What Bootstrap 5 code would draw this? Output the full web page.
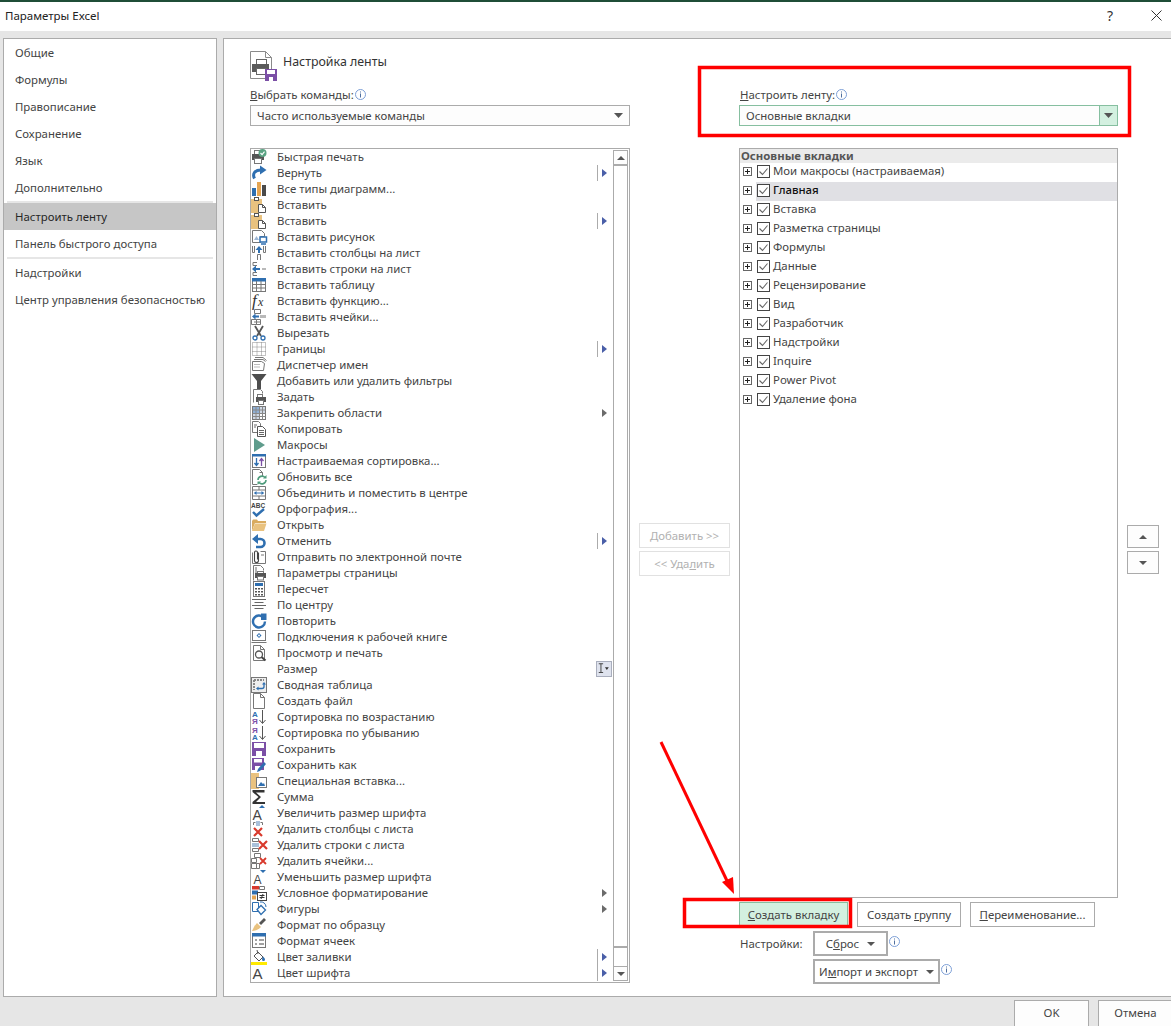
<!DOCTYPE html>
<html lang="ru">
<head>
  <meta charset="UTF-8">
  <meta name="viewport" content="width=device-width, initial-scale=1.0">
  <title>Параметры Excel</title>
  <link href="https://cdn.jsdelivr.net/npm/bootstrap@5.3.0/dist/css/bootstrap.min.css" rel="stylesheet">
  <style>
    body { margin: 0; height: 1026px; overflow: hidden; background: #e6e6e6; font-family: "Noto Sans", sans-serif; font-size: 11.4px; line-height: 16px; color: #444; }
    .dlg { position: relative; height: 1026px; overflow: hidden; }
    .dlg-title { height: 31px; background: #fff; border-top: 2px solid #1f4e37; padding: 0 0 2px 5px; color: #222; font-size: 11.5px; }
    .dlg-title .close-x { margin: 0 9px 0 38px; }
    .dlg-title .help-q { font-size: 14px; color: #333; }
    .dlg-body { height: 959px; margin-top: 7px; }
    .side { width: 214px; margin-left: 3px; background: #fff; border: 1px solid #ababab; flex: none; }
    .side .list-group-item { height: 27px; padding: 0 0 0 11px; border: 0; background: transparent; color: #444; font-size: 11.4px; line-height: 27px; white-space: nowrap; }
    .side .list-group-item.active { background: #c6c6c6; color: #262626; }
    .side-sep { height: 2px; margin: 0 3px; background: #e6e6e6; }
    .main { flex: 1; margin-left: 6px; background: #fff; border: 1px solid #ababab; border-right: 0; padding-left: 26px; }
    .main-head { height: 47px; padding-top: 7px; gap: 6px; font-size: 12.4px; color: #333; }
    .main-head span { margin-top: -8px; }
    .col-cmd { width: 380px; }
    .col-move { width: 91px; margin-left: 9px; padding-top: 437px; gap: 3px; }
    .col-rib { width: 379px; margin-left: 9px; }
    .col-order { width: 32px; margin-left: 9px; padding-top: 439px; gap: 3px; }
    .lbl { height: 19px; padding-bottom: 2px; line-height: 16px; white-space: nowrap; gap: 1px; }
    .col-rib .lbl { padding-left: 1px; }
    .opt-select.form-select { height: 21px; padding: 0 20px 0 6px; border: 1px solid #ababab; border-radius: 0; font-size: 11.4px; line-height: 19px; color: #444; box-shadow: none;
      background-color: #fdfdfd; background-size: 9px 5px; background-position: right 6px center; background-repeat: no-repeat;
      background-image: url("data:image/svg+xml,%3csvg xmlns='http://www.w3.org/2000/svg' viewBox='0 0 9 5'%3e%3cpath d='M0 0h9L4.5 5z' fill='%23555'/%3e%3c/svg%3e"); }
    .opt-select.green.form-select { border-color: #86bfa0;
      background-image: url("data:image/svg+xml,%3csvg xmlns='http://www.w3.org/2000/svg' viewBox='0 0 9 5'%3e%3cpath d='M0 0h9L4.5 5z' fill='%23555'/%3e%3c/svg%3e"), linear-gradient(#d3f0e0, #d3f0e0), linear-gradient(#86bfa0, #86bfa0);
      background-size: 9px 5px, 17px 100%, 1px 100%;
      background-position: right 4px center, right 0 top, right 17px top; }
    .cmd-box { height: 835px; margin-top: 22px; border: 1px solid #ababab; background: #fff; }
    .cmd-rows { flex: 1; min-width: 0; }
    .cmd-row { height: 16px; padding-right: 6px; white-space: nowrap; }
    .cmd-row > svg:first-child { flex: none; margin-right: 10px; overflow: visible; }
    .cmd-split { width: 1px; height: 16px; margin-right: 4px; background: #ababab; }
    .cmd-arrow { width: 0; height: 0; border-left: 5px solid #4a5fa8; border-top: 4px solid transparent; border-bottom: 4px solid transparent; }
    .cmd-arrow.plain { border-left-color: #6b6b6b; }
    .cmd-size { margin-right: -5px; background: #dfe3ee; border: 1px solid #a9aebd; }
    .cmd-scroll { width: 15px; margin: 1px 1px 1px 0; flex: none; border-left: 1px solid #ababab; border-right: 1px solid #ababab; }
    .scr-btn { height: 15px; border-top: 1px solid #ababab; border-bottom: 1px solid #ababab; background: #fdfdfd; }
    .scr-thumb { height: 784px; margin-top: -1px; border-top: 2px solid #ababab; border-bottom: 2px solid #ababab; }
    .tri-up { width: 0; height: 0; border-left: 4px solid transparent; border-right: 4px solid transparent; border-bottom: 4px solid #555; }
    .tri-dn { width: 0; height: 0; border-left: 4px solid transparent; border-right: 4px solid transparent; border-top: 4px solid #555; }
    .rib-box { height: 750px; margin-top: 22px; border: 1px solid #ababab; background: #fff; }
    .rib-head { height: 14px; padding-left: 1px; background: #ebebeb; font-weight: 700; line-height: 14px; color: #555; }
    .rib-row { height: 19px; padding-left: 3px; gap: 4px; }
    .rib-plus { flex: none; margin-top: -3px; }
    .rib-label { flex: 1; height: 19px; padding: 0 0 3px 1px; gap: 3px; line-height: 16px; }
    .rib-label.sel { background: #e0e0e4; color: #111; font-weight: 500; }
    .rib-check.form-check-input { width: 13px; height: 13px; margin: 0; flex: none; border: 1px solid #444; border-radius: 0; background-color: #fff; box-shadow: none; opacity: 1;
      background-size: 11px 11px; background-image: url("data:image/svg+xml,%3csvg xmlns='http://www.w3.org/2000/svg' viewBox='0 0 11 11'%3e%3cpath d='M1.5 5.5l3 3 5-6' fill='none' stroke='%23666' stroke-width='1.1'/%3e%3c/svg%3e"); }
    .opt-btn.btn { height: 25px; padding: 0; border: 1px solid #ababab; border-radius: 0; background: #fff; color: #444; font-size: 11.4px; line-height: 22px; white-space: nowrap; }
    .opt-btn.btn:disabled { opacity: 1; border: 1px solid #e1e1e1; color: #b1b1b1; background: #fff; }
    .opt-btn.hot.btn { background: #d3f0e0; border-color: #86bfa0; }
    .opt-btn.thick.btn { border-width: 2px; }
    .btn-new { width: 109px; margin-right: 9px; }
    .btn-grp { width: 104px; margin-right: 9px; }
    .btn-ren { width: 125px; }
    .rib-actions { margin-top: 4px; }
    .set-row { margin-top: 4px; height: 25px; }
    .set-row + .set-row { margin-top: 3px; }
    .set-name { width: 74px; padding-left: 1px; }
    .btn-reset { width: 75px; }
    .btn-imp { width: 127px; }
    .set-info { margin: -4px 0 0 1px; }
    .order-btn { width: 32px; height: 23px; border: 1px solid #ababab; background: #fdfdfd; }
    .dlg-foot { height: 29px; padding-top: 3px; gap: 9px; }
    .foot-btn.btn { width: 75px; height: 30px; padding: 0 0 5px; border: 1px solid #ababab; border-radius: 0; background: #fdfdfd; color: #444; font-size: 11.4px; flex: none; }
    .foot-btn.cancel { margin-right: -2px; }
    .marks { position: absolute; left: 0; top: 0; pointer-events: none; }
  </style>
</head>
<body>
  <div class="dlg">
    <div class="dlg-title d-flex align-items-center">
      <span class="flex-grow-1">Параметры Excel</span>
      <span class="help-q">?</span>
      <svg class="close-x" width="11" height="11" viewBox="0 0 11 11"><path d="M.5.5l10 10M10.5.5l-10 10" stroke="#333" fill="none"/></svg>
    </div>

    <div class="dlg-body d-flex">
      <!-- Левое меню -->
      <div class="side">
        <div class="list-group list-group-flush" id="side-a"></div>
        <div class="side-sep"></div>
        <div class="list-group list-group-flush" id="side-b"></div>
        <div class="side-sep"></div>
        <div class="list-group list-group-flush" id="side-c"></div>
      </div>

      <div class="main">
        <div class="main-head d-flex align-items-center">
          <svg width="27" height="30" viewBox="0 0 27 30">
            <path d="M.5.5h15l6 6v21H.5z" fill="#fff" stroke="#8a8a8a"/>
            <path d="M15.5.5v6h6" fill="none" stroke="#8a8a8a"/>
            <rect x="6.5" y="8.5" width="10" height="5" fill="#fff" stroke="#666"/>
            <rect x="2" y="13" width="17" height="8" fill="#5a5a5a"/>
            <rect x="6.5" y="17.5" width="10" height="6" fill="#fff" stroke="#666"/>
            <rect x="15" y="18" width="12" height="12" fill="#7b4fa6"/>
            <rect x="17" y="19" width="8" height="4" fill="#fff"/>
            <rect x="19" y="26" width="4" height="4" fill="#fff"/>
          </svg>
          <span>Настройка ленты</span>
        </div>

        <div class="d-flex">
          <div class="col-cmd">
            <div class="lbl d-flex align-items-center"><span><u>В</u>ыбрать команды:</span><svg class="info-i" width="11" height="11" viewBox="0 0 11 11"><circle cx="5.5" cy="5.5" r="5" fill="none" stroke="#7d9fd6"/><path d="M5.5 2.5v1M5.5 4.5v4" stroke="#4f6f9f"/></svg></div>
            <select class="form-select opt-select"><option>Часто используемые команды</option></select>
            <div class="cmd-box d-flex">
              <div class="cmd-rows" id="cmd-list"></div>
              <div class="cmd-scroll d-flex flex-column">
                <div class="scr-btn d-flex align-items-center justify-content-center"><div class="tri-up"></div></div>
                <div class="scr-thumb"></div>
                <div class="flex-grow-1"></div>
                <div class="scr-btn d-flex align-items-center justify-content-center"><div class="tri-dn"></div></div>
              </div>
            </div>
          </div>

          <div class="col-move d-flex flex-column">
            <button class="btn opt-btn" disabled><u>Д</u>обавить &gt;&gt;</button>
            <button class="btn opt-btn" disabled>&lt;&lt; Уда<u>л</u>ить</button>
          </div>

          <div class="col-rib">
            <div class="lbl d-flex align-items-center"><span><u>Н</u>астроить ленту:</span><svg class="info-i" width="11" height="11" viewBox="0 0 11 11"><circle cx="5.5" cy="5.5" r="5" fill="none" stroke="#7d9fd6"/><path d="M5.5 2.5v1M5.5 4.5v4" stroke="#4f6f9f"/></svg></div>
            <select class="form-select opt-select green"><option>Основные вкладки</option></select>
            <div class="rib-box">
              <div class="rib-head">Основные вкладки</div>
              <div id="rib-list"></div>
            </div>
            <div class="rib-actions d-flex">
              <button class="btn opt-btn hot btn-new"><u>С</u>оздать вкладку</button>
              <button class="btn opt-btn btn-grp">Создать <u>г</u>руппу</button>
              <button class="btn opt-btn btn-ren"><u>П</u>ереименование...</button>
            </div>
            <div class="set-row d-flex align-items-center">
              <span class="set-name">Настройки:</span>
              <button class="btn opt-btn thick btn-reset d-flex align-items-center justify-content-center gap-2"><span>С<u>б</u>рос</span><span class="tri-dn"></span></button>
              <svg class="set-info" width="11" height="11" viewBox="0 0 11 11"><circle cx="5.5" cy="5.5" r="5" fill="none" stroke="#7d9fd6"/><path d="M5.5 2.5v1M5.5 4.5v4" stroke="#4f6f9f"/></svg>
            </div>
            <div class="set-row d-flex align-items-center">
              <span class="set-name"></span>
              <button class="btn opt-btn thick btn-imp d-flex align-items-center justify-content-center gap-2"><span>И<u>м</u>порт и экспорт</span><span class="tri-dn"></span></button>
              <svg class="set-info" width="11" height="11" viewBox="0 0 11 11"><circle cx="5.5" cy="5.5" r="5" fill="none" stroke="#7d9fd6"/><path d="M5.5 2.5v1M5.5 4.5v4" stroke="#4f6f9f"/></svg>
            </div>
          </div>

          <div class="col-order d-flex flex-column">
            <div class="order-btn d-flex align-items-center justify-content-center"><div class="tri-up"></div></div>
            <div class="order-btn d-flex align-items-center justify-content-center"><div class="tri-dn"></div></div>
          </div>
        </div>
      </div>
    </div>

    <div class="dlg-foot d-flex justify-content-end">
      <button class="btn foot-btn">OK</button>
      <button class="btn foot-btn cancel">Отмена</button>
    </div>

    <!-- Красные пометки поверх окна -->
    <svg class="marks" width="1171" height="1026" viewBox="0 0 1171 1026">
      <rect x="699.5" y="67.5" width="430" height="68" fill="none" stroke="#f00" stroke-width="3.5"/>
      <rect x="684.5" y="899.5" width="166" height="27" fill="none" stroke="#f00" stroke-width="3.5"/>
      <path d="M661 742l68 143" fill="none" stroke="#f00" stroke-width="3"/>
      <path d="M722 882l11 -5 1 17z" fill="#f00"/>
    </svg>
  </div>

  <script src="https://cdn.jsdelivr.net/npm/bootstrap@5.3.0/dist/js/bootstrap.bundle.min.js"></script>
  <script>
    // Меню слева
    function fillSide(id, items, active) {
      var box = document.getElementById(id);
      items.forEach(function(t) {
        box.innerHTML += `<div class="list-group-item${t === active ? ' active' : ''}">${t}</div>`;
      });
    }
    fillSide('side-a', ['Общие', 'Формулы', 'Правописание', 'Сохранение', 'Язык', 'Дополнительно']);
    fillSide('side-b', ['Настроить ленту', 'Панель быстрого доступа'], 'Настроить ленту');
    fillSide('side-c', ['Надстройки', 'Центр управления безопасностью']);

    // Цвета значков
    var BL = '#2f6fb0', TN = '#e9c27f', GR = '#555', LN = '#777', PU = '#7b4fa6', RD = '#d8392b';
    var printer = `<rect x="3.5" y="1.5" width="7" height="4" fill="#fff" stroke="${LN}"/><rect x="1" y="5" width="12" height="6" fill="${GR}"/><rect x="3.5" y="9.5" width="7" height="5" fill="#fff" stroke="${LN}"/>`;
    var pageTop = `<path d="M2.5.5h7l4 4v11h-11z" fill="#fff" stroke="${LN}"/><path d="M9.5.5v4h4" fill="none" stroke="${LN}"/>`;
    var clip = `<rect x="0" y="2" width="11" height="14" fill="${TN}"/><rect x="3.5" y=".5" width="4" height="3" fill="#fff" stroke="${GR}"/>`;
    var floppy = `<rect x="1" y="1" width="14" height="14" fill="${PU}"/><rect x="3" y="2" width="10" height="5" fill="#fff"/><rect x="5" y="10" width="6" height="5" fill="#fff"/>`;

    var icons = {
      quick: printer + `<circle cx="11.5" cy="4" r="4" fill="#5aa383"/><path d="M9.5 4l1.6 1.6 2.4-3" fill="none" stroke="#fff" stroke-width="1.2"/>`,
      redo: `<path d="M3.5 13.5C1 8.5 4 5 10 5" fill="none" stroke="${BL}" stroke-width="3"/><path d="M9 .5L15.5 5 9 9.5z" fill="${BL}"/>`,
      charts: `<rect x="1" y="7" width="4" height="8" fill="${BL}"/><rect x="6" y="1" width="4" height="14" fill="#e5a552"/><rect x="11" y="4" width="4" height="11" fill="#4a4a4a"/>`,
      paste: clip + `<path d="M7.5 7.5h4l3 3v5h-7z" fill="#fff" stroke="${GR}"/><path d="M11.5 7.5v3h3" fill="none" stroke="${GR}"/>`,
      picture: `<path d="M1.5 1.5h9l3 3v3h-4v6h-8z" fill="#fff" stroke="${LN}"/><path d="M3 11l2.5-4L8 11z" fill="#9db6d4"/><rect x="9" y="8" width="6.5" height="5" fill="#fff" stroke="${BL}" stroke-width="1.5"/><path d="M10 15h5" stroke="${BL}" stroke-width="1.5"/>`,
      cols: `<path d="M1.5 1v6.5h2V1M12.5 1v6.5h2V1M6.5 15V9.5h3V15" fill="none" stroke="${LN}"/><path d="M8 1l3.5 4H9v3H7V5H4.5z" fill="${BL}"/>`,
      rows: `<path d="M6 1.5H2v3h4M6 11.5H2v3h4" fill="none" stroke="${LN}"/><path d="M1 8l4-3.5V7h4v2H5v2.5z" fill="${BL}"/><path d="M11 7h4v2h-4z" fill="#b9b9b9"/>`,
      table: `<rect x="1.5" y="1.5" width="13" height="13" fill="#fff" stroke="${LN}"/><rect x="1" y="1" width="14" height="3.5" fill="${BL}"/><path d="M1.5 7.5h13M1.5 11h13M5.5 4v10.5M10 4v10.5" stroke="${LN}" fill="none"/>`,
      func: `<text x="1" y="13" font-family="Liberation Serif, serif" font-style="italic" font-size="17" fill="#333">f</text><text x="7" y="13" font-family="Liberation Serif, serif" font-style="italic" font-size="12" fill="#333">x</text>`,
      cells: `<path d="M3.5.5h6v4h-6zM.5 10.5h5v5h-5zM5.5 10.5h4v5h-4zM3 13h6" fill="none" stroke="${LN}"/><path d="M1 7.5l3.5-3V6.5H8v2H4.5v2z" fill="${BL}"/><rect x="9" y="6" width="6" height="3" fill="#b9b9b9"/>`,
      cut: `<path d="M4 1l6 10M12 1L6 11" stroke="${GR}" stroke-width="1.8" fill="none"/><circle cx="4" cy="13" r="2" fill="#fff" stroke="${BL}" stroke-width="1.3"/><circle cx="12" cy="13" r="2" fill="#fff" stroke="${BL}" stroke-width="1.3"/>`,
      borders: `<path d="M1.5 1.5h13v13h-13zM1.5 6h13M1.5 10.5h13M6 1.5v13M10.5 1.5v13" fill="none" stroke="#888" stroke-dasharray="1 1"/>`,
      names: `<path d="M1.5 4.5h9l3 2-1 7h-11zM3 2.5h9l2.5 2M4 .5h8l3.5 3" fill="#fff" stroke="${LN}"/><path d="M3 7.5h6M3 10h6" stroke="#bbb"/>`,
      filter: `<path d="M.5 1h15L10 8v8H6V8z" fill="#4d4d4d"/>`,
      ask: `<path d="M2.5 13.5V.5h7l2 2v2" fill="#fff" stroke="${LN}"/><rect x="6.5" y="5.5" width="5" height="3" fill="#fff" stroke="${LN}"/><rect x="5" y="8" width="10" height="5" fill="${GR}"/><rect x="7.5" y="11.5" width="5" height="4" fill="#fff" stroke="${LN}"/>`,
      freeze: `<rect x="1.5" y="1.5" width="13" height="13" fill="#fff" stroke="${LN}"/><rect x="2" y="2" width="6" height="6" fill="#8fb0d6"/><rect x="9" y="2" width="5" height="6" fill="#cfd8e4"/><rect x="2" y="9" width="6" height="5" fill="#cfd8e4"/><path d="M1.5 5h13M1.5 8.5h13M1.5 11.5h13M5 1.5v13M8.5 1.5v13M11.5 1.5v13" stroke="#888" fill="none"/>`,
      copy: `<path d="M1.5.5h6l2 2v9h-8z" fill="#fff" stroke="${LN}"/><path d="M6.5 5.5h5l3 3v7h-8z" fill="#fff" stroke="#555"/><path d="M3 4h3M3 6h2M8 9.5h5M8 11.5h5M8 13.5h5" stroke="#666"/>`,
      macro: `<path d="M3 1l11 7-11 7z" fill="#5f9c8c"/>`,
      sortbox: `<rect x="1.5" y="1.5" width="13" height="13" fill="#fff" stroke="${LN}"/><rect x="1" y="1" width="14" height="2.5" fill="${BL}"/><path d="M5.5 5v7M3.5 10l2 2.5 2-2.5" stroke="${BL}" stroke-width="1.3" fill="none"/><path d="M10.5 13V6M8.5 8l2-2.5 2 2.5" stroke="${PU}" stroke-width="1.3" fill="none"/>`,
      refresh: `<path d="M1.5.5h7l3 3v4M6 15.5H1.5V.5" fill="#fff" stroke="${LN}"/><path d="M8.5 3.5h3" stroke="${LN}"/><path d="M7 11a4 4 0 0 1 7-2.5M15 11a4 4 0 0 1-7 2.5" fill="none" stroke="#4f9c7c" stroke-width="1.6"/><path d="M15.5 6v3.5H12zM6.5 16v-3.5H10z" fill="#4f9c7c"/>`,
      merge: `<path d="M1.5 1.5h13v13h-13zM1.5 5h13M1.5 11h13M8 1.5V5M8 11v3.5" fill="#fff" stroke="${LN}"/><path d="M3.5 8h9" stroke="${BL}"/><path d="M3 8l2.5-2v4zM13 8l-2.5-2v4z" fill="${BL}"/>`,
      spell: `<text x="0" y="6.5" font-family="Liberation Sans, sans-serif" font-weight="700" font-size="6.5" fill="#444">ABC</text><path d="M2 11l3.5 3.5L13 8" fill="none" stroke="${BL}" stroke-width="2.4"/>`,
      open: `<path d="M1 4l1-1.5h4L7 4h8v2H4L1 14z" fill="#d9ab5f"/><path d="M1 14l3-7.5h11.5L13 14z" fill="${TN}"/>`,
      undo: `<path d="M3 6h6.5a4 4 0 0 1 0 8H5" fill="none" stroke="${BL}" stroke-width="2.6"/><path d="M7 1v10L1 6z" fill="${BL}"/>`,
      mail: `<path d="M1.5 3.5v11h13v-12h-5" fill="#fff" stroke="${LN}"/><path d="M7.5 3.5v8a2 2 0 0 1-4 0v-8a1.5 1.5 0 0 1 3 0v7" fill="none" stroke="#444" stroke-width="1.1"/><path d="M10 6h3" stroke="${LN}"/>`,
      setup: `<path d="M2.5 15.5V.5h7l3 3v2" fill="#fff" stroke="${LN}"/><path d="M4 3h2M4 5h2M4 7h2" stroke="#666"/><rect x="6.5" y="6.5" width="6" height="2" fill="#fff" stroke="${LN}"/><rect x="4" y="8" width="11" height="5" fill="${GR}"/><rect x="6.5" y="11.5" width="6" height="3.5" fill="#fff" stroke="${LN}"/>`,
      calc: `<rect x="2.5" y=".5" width="11" height="15" fill="#fff" stroke="${LN}"/><rect x="4" y="2" width="8" height="3" fill="${BL}"/><path d="M4 7h2v1.5H4zM7 7h2v1.5H7zM10 7h2v1.5h-2zM4 10h2v1.5H4zM7 10h2v1.5H7zM10 10h2v1.5h-2zM4 13h2v1.5H4zM7 13h2v1.5H7zM10 13h2v1.5h-2z" fill="#555"/>`,
      center: `<path d="M1 2.5h14M3.5 5.5h9M1 8.5h14M3.5 11.5h9" stroke="#666" fill="none"/>`,
      repeat: `<path d="M12.5 4.5A6 6 0 1 0 14 8.5" fill="none" stroke="${BL}" stroke-width="2.4"/><path d="M10 .5v6.5h5.5V.5z" fill="${BL}"/>`,
      conn: `<rect x="1.5" y="1.5" width="13" height="10" fill="#fff" stroke="${LN}"/><path d="M8 4l2.5 2.5L8 9 5.5 6.5z" fill="${BL}"/><circle cx="8" cy="6.5" r="1" fill="#fff"/><path d="M.5 13.5h15" stroke="${LN}"/>`,
      preview: pageTop + `<circle cx="8" cy="9.5" r="3.5" fill="#fff" stroke="#555" stroke-width="1.3"/><path d="M10.5 12l4 3.5" stroke="#444" stroke-width="2"/>`,
      none: '',
      pivot: `<rect x=".5" y=".5" width="15" height="15" fill="#eee" stroke="${LN}"/><path d="M3 3h10M3 3v10" stroke="#888" stroke-width="2" stroke-dasharray="2 1"/><path d="M7 11.5h4a2 2 0 0 0 2-2V7" fill="none" stroke="${BL}" stroke-width="1.3"/><path d="M7.5 9.5v4l-2.5-2zM11 7.5h4l-2-2.5z" fill="${BL}"/>`,
      blank: pageTop,
      asc: `<text x="1" y="7.5" font-family="Liberation Sans, sans-serif" font-weight="700" font-size="8" fill="${BL}">A</text><text x="1" y="15" font-family="Liberation Sans, sans-serif" font-weight="700" font-size="8" fill="${PU}">Я</text><path d="M11.5 1v13M8.5 11l3 3.5 3-3.5" fill="none" stroke="#555"/>`,
      desc: `<text x="1" y="7.5" font-family="Liberation Sans, sans-serif" font-weight="700" font-size="8" fill="${PU}">Я</text><text x="1" y="15" font-family="Liberation Sans, sans-serif" font-weight="700" font-size="8" fill="${BL}">A</text><path d="M11.5 1v13M8.5 11l3 3.5 3-3.5" fill="none" stroke="#555"/>`,
      save: floppy,
      saveas: `<rect x="1" y="1" width="12" height="12" fill="${PU}"/><rect x="3" y="2" width="8" height="3.5" fill="#fff"/><rect x="4" y="9" width="6" height="4" fill="#fff"/><path d="M6 15l1-3 6-7 2 2-6 7z" fill="${BL}"/>`,
      special: `<rect x="0" y="0" width="8" height="16" fill="${TN}"/><rect x="5.5" y="4.5" width="10" height="10" fill="#fff" stroke="${LN}"/><path d="M7 13l3-4 2 2 1-1 1 3z" fill="${BL}"/>`,
      sum: `<path d="M1.5 1h12v2.5H5l5 4.5-5 5h9V15H1.5v-2l6-5-6-5z" fill="#333"/>`,
      grow: `<text x="1.5" y="15" font-family="Liberation Sans, sans-serif" font-size="14" fill="#444">A</text><path d="M8 3l3-3 3 3z" fill="${BL}"/>`,
      delcol: `<path d="M2.5 4V1.5h2M9.5 1.5h2V4" fill="none" stroke="${LN}"/><rect x="5" y="0" width="4" height="5" fill="#a9c0da"/><path d="M3 7l8 8M11 7l-8 8" stroke="${RD}" stroke-width="2.2" fill="none"/>`,
      delrow: `<path d="M1.5 1.5h6v3h-6zM1.5 11.5h6v3h-6z" fill="none" stroke="${LN}"/><rect x="1" y="6" width="7" height="4" fill="#a9c0da"/><path d="M8 4l8 8M16 4l-8 8" stroke="${RD}" stroke-width="2.2" fill="none"/>`,
      delcell: `<path d="M3.5.5h6v4h-6zM.5 5.5h5v4h-5zM.5 10.5h5v5h-5zM5.5 10.5h3v5h-3z" fill="none" stroke="${LN}"/><path d="M9 5l6 6M15 5l-6 6" stroke="${RD}" stroke-width="1.8" fill="none"/>`,
      shrink: `<text x="2.5" y="15" font-family="Liberation Sans, sans-serif" font-size="12" fill="#444">A</text><path d="M9 1h6l-3 3z" fill="${BL}"/>`,
      cond: `<rect x="1" y="1" width="7" height="3.5" fill="${RD}"/><path d="M8.5 1.5h5v3h-5z" fill="#fff" stroke="${LN}"/><rect x="1" y="5.5" width="6" height="4" fill="${BL}"/><rect x="1" y="10.5" width="4" height="4" fill="#e5a552"/><rect x="6.5" y="7.5" width="9" height="8" fill="#fff" stroke="#444"/><path d="M8.5 10.5h5M8.5 12.5h5M12 9l-2 5" stroke="#333" fill="none"/>`,
      shapes: `<path d="M1.5 1.5h6v9h-6z" fill="#fff" stroke="${BL}"/><path d="M6 8.5L10 4.5 14.5 9 10 13.5z" fill="#fff" stroke="${BL}" stroke-width="1.3"/><path d="M9 1a5 5 0 0 1 6 5" fill="none" stroke="${BL}"/>`,
      brush: `<path d="M1 14c2-4 3-6 5-8l4 4c-2 2-5 4-9 4z" fill="${TN}"/><path d="M8 6l5-5 2 2-5 5z" fill="#555"/>`,
      cellfmt: `<rect x="1.5" y="1.5" width="13" height="13" fill="#fff" stroke="${LN}"/><rect x="1" y="0" width="14" height="3.5" fill="${BL}"/><path d="M4 7h2M4 11h2M8 7h5M8 11h5" stroke="#444" fill="none"/>`,
      fill: `<path d="M3 7l4-4 5 5-4 4z" fill="#fff" stroke="#555"/><path d="M6 1l1 4" stroke="#555"/><path d="M12 7.5c1 1 2 2 2 3a1 1 0 0 1-3 0c0-1 .5-2 1-3z" fill="${BL}"/><rect x="0" y="13" width="16" height="3" fill="#ffea00"/>`,
      fontc: `<text x="1.5" y="14" font-family="Liberation Sans, sans-serif" font-size="15" fill="#444">A</text>`
    };

    // Часто используемые команды: [значок, подпись, хвост строки]
    var commands = [
      ['quick', 'Быстрая печать'], ['redo', 'Вернуть', 'split'], ['charts', 'Все типы диаграмм...'], ['paste', 'Вставить'],
      ['paste', 'Вставить', 'split'], ['picture', 'Вставить рисунок'], ['cols', 'Вставить столбцы на лист'], ['rows', 'Вставить строки на лист'],
      ['table', 'Вставить таблицу'], ['func', 'Вставить функцию...'], ['cells', 'Вставить ячейки...'], ['cut', 'Вырезать'],
      ['borders', 'Границы', 'split'], ['names', 'Диспетчер имен'], ['filter', 'Добавить или удалить фильтры'], ['ask', 'Задать'],
      ['freeze', 'Закрепить области', 'plain'], ['copy', 'Копировать'], ['macro', 'Макросы'], ['sortbox', 'Настраиваемая сортировка...'],
      ['refresh', 'Обновить все'], ['merge', 'Объединить и поместить в центре'], ['spell', 'Орфография...'], ['open', 'Открыть'],
      ['undo', 'Отменить', 'split'], ['mail', 'Отправить по электронной почте'], ['setup', 'Параметры страницы'], ['calc', 'Пересчет'],
      ['center', 'По центру'], ['repeat', 'Повторить'], ['conn', 'Подключения к рабочей книге'], ['preview', 'Просмотр и печать'],
      ['none', 'Размер', 'size'], ['pivot', 'Сводная таблица'], ['blank', 'Создать файл'], ['asc', 'Сортировка по возрастанию'],
      ['desc', 'Сортировка по убыванию'], ['save', 'Сохранить'], ['saveas', 'Сохранить как'], ['special', 'Специальная вставка...'],
      ['sum', 'Сумма'], ['grow', 'Увеличить размер шрифта'], ['delcol', 'Удалить столбцы с листа'], ['delrow', 'Удалить строки с листа'],
      ['delcell', 'Удалить ячейки...'], ['shrink', 'Уменьшить размер шрифта'], ['cond', 'Условное форматирование', 'plain'], ['shapes', 'Фигуры', 'plain'],
      ['brush', 'Формат по образцу'], ['cellfmt', 'Формат ячеек'], ['fill', 'Цвет заливки', 'split'], ['fontc', 'Цвет шрифта', 'split']
    ];
    var tails = {
      split: '<i class="cmd-split ms-auto"></i><i class="cmd-arrow"></i>',
      plain: '<i class="cmd-arrow plain ms-auto"></i>',
      size: '<svg class="cmd-size ms-auto" width="16" height="16" viewBox="0 0 16 16"><path d="M2 2h5M2 12h5M4.5 2v10" stroke="#333" fill="none"/><path d="M9 6h4.5l-2.250 3z" fill="#333"/></svg>'
    };
    var rows = '';
    commands.forEach(function(c) {
      rows += `<div class="cmd-row d-flex align-items-center"><svg width="16" height="16" viewBox="0 0 16 16">${icons[c[0]]}</svg><span>${c[1]}</span>${c[2] ? tails[c[2]] : ''}</div>`;
    });
    document.getElementById('cmd-list').innerHTML = rows;

    // Основные вкладки
    var tabs = ['Мои макросы (настраиваемая)', 'Главная', 'Вставка', 'Разметка страницы', 'Формулы', 'Данные', 'Рецензирование', 'Вид', 'Разработчик', 'Надстройки', 'Inquire', 'Power Pivot', 'Удаление фона'];
    var ribHtml = '';
    tabs.forEach(function(t) {
      ribHtml += `<div class="rib-row d-flex align-items-center">
        <svg width="9" height="9" viewBox="0 0 9 9" class="rib-plus"><rect x=".5" y=".5" width="8" height="8" fill="#fff" stroke="#666"/><path d="M2 4.5h5M4.5 2v5" stroke="#222"/></svg>
        <label class="rib-label d-flex align-items-center${t === 'Главная' ? ' sel' : ''}"><input type="checkbox" class="form-check-input rib-check" checked><span>${t}</span></label>
      </div>`;
    });
    document.getElementById('rib-list').innerHTML = ribHtml;
  </script>
</body>
</html>
